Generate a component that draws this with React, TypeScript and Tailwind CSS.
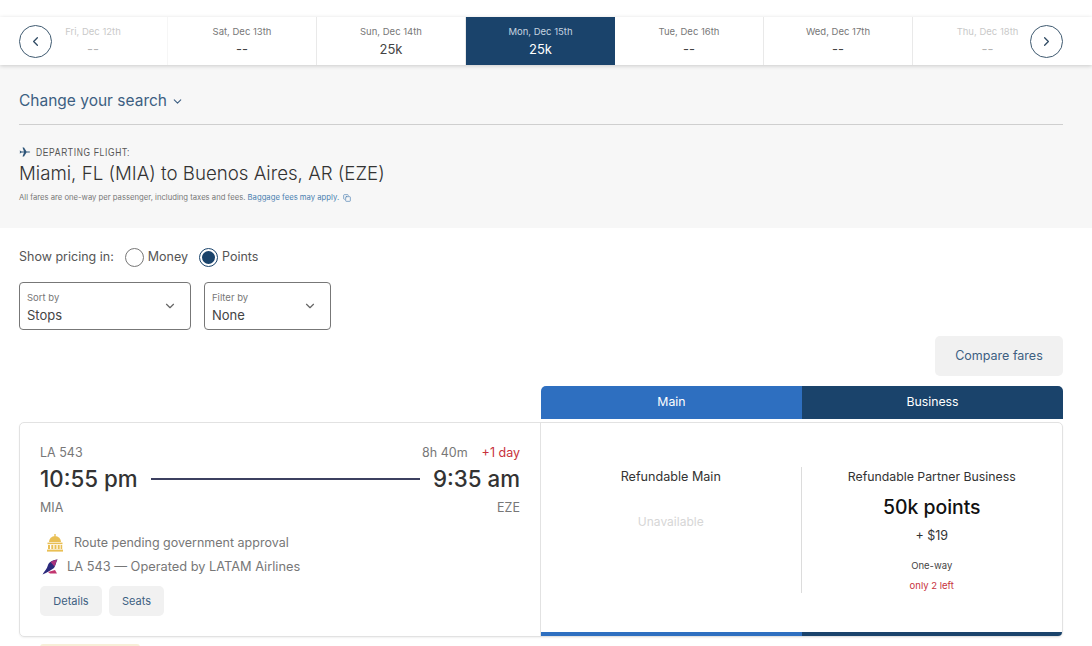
import React from "react";
import { ChevronDown, ChevronLeft, ChevronRight, Copy } from "lucide-react";

const days = [
  { label: "Fri, Dec 12th", value: "--", faded: true },
  { label: "Sat, Dec 13th", value: "--" },
  { label: "Sun, Dec 14th", value: "25k" },
  { label: "Mon, Dec 15th", value: "25k", selected: true },
  { label: "Tue, Dec 16th", value: "--" },
  { label: "Wed, Dec 17th", value: "--" },
  { label: "Thu, Dec 18th", value: "--", faded: true },
];

function DayCell({ label, value, faded, selected, last }: any) {
  let tone = "border-r border-[#e9e9e9] bg-white";
  if (selected) tone = "bg-[#1a436b]";
  if (last) tone = "bg-white";
  return (
    <div className={`flex h-full w-[149px] flex-col items-center pt-[8px] ${tone} ${faded ? "opacity-40" : ""}`}>
      <div className={`text-[9.5px] leading-[13px] ${selected ? "text-[#c5d3e0]" : "text-[#777]"}`}>{label}</div>
      <div className={`mt-[2px] text-[13px] leading-[18px] ${selected ? "text-white" : "text-[#444]"}`}>{value}</div>
    </div>
  );
}

function ArrowButton({ side }: { side: "left" | "right" }) {
  const pos = side === "left" ? "left-[19px]" : "left-[1030px]";
  return (
    <div className={`absolute top-[8px] flex h-[33px] w-[33px] items-center justify-center rounded-full border border-[#3f5a70] bg-white ${pos}`}>
      {side === "left" ? (
        <ChevronLeft size={15} color="#2f4a63" />
      ) : (
        <ChevronRight size={15} color="#2f4a63" />
      )}
    </div>
  );
}

function Radio({ checked }: { checked?: boolean }) {
  return (
    <span className={`flex h-[19px] w-[19px] items-center justify-center rounded-full border ${checked ? "border-[#1a436b] bg-white" : "border-[#777]"}`}>
      {checked && <span className="h-[13px] w-[13px] rounded-full bg-[#1a436b]" />}
    </span>
  );
}

function SelectBox({ label, value, width }: { label: string; value: string; width: string }) {
  return (
    <div className={`relative flex h-[48px] flex-col rounded-[4px] border border-[#777] pl-[7px] pt-[8px] ${width}`}>
      <div className="text-[9.5px] leading-[13px] text-[#777]">{label}</div>
      <div className="mt-[3px] text-[13px] leading-[17px] text-[#444]">{value}</div>
      <ChevronDown size={14} color="#666" className="absolute right-[13px] top-[16px]" />
    </div>
  );
}

function PlaneIcon() {
  return (
    <svg width="12" height="10" viewBox="0 0 24 20" fill="#2d5478">
      <path d="M1 7.5 L3 7.5 L5 9 L10 9 L7 1 L10 1 L15 9 L21 9 Q24 10 21 11 L15 11 L10 19 L7 19 L10 11 L5 11 L3 12.5 L1 12.5 L2.5 10 Z" />
    </svg>
  );
}

function BankIcon() {
  return (
    <svg width="18" height="18" viewBox="0 0 18 18" fill="#e9bf54">
      <rect x="8.3" y="0" width="1.4" height="2" />
      <path d="M3 8 A6 6 0 0 1 15 8 Z" />
      <rect x="1.5" y="8.6" width="15" height="1.6" />
      <rect x="2" y="11" width="2" height="4" />
      <rect x="5.3" y="11" width="2" height="4" />
      <rect x="8.5" y="11" width="2" height="4" />
      <rect x="11.7" y="11" width="2" height="4" />
      <rect x="14.6" y="11" width="1.6" height="4" />
      <rect x="1" y="15.6" width="16" height="2" />
    </svg>
  );
}

function LatamIcon() {
  return (
    <svg width="16" height="16" viewBox="0 0 16 16">
      <path d="M0.5 15.5 C2.5 12 5 10 6 6 C7 3 10 1.2 15.5 0.5 C14 3 14 6 12 9 C9.5 11 5 13.5 0.5 15.5 Z" fill="#2b2a7c" />
      <path d="M8.5 3 C10.5 1.8 13 1 15.5 0.5 C14 2.5 13.8 5 12.5 7.5 Z" fill="#a8327c" />
      <path d="M6 13 L13 11 L15 14.5 L8 14.5 Z" fill="#c2356f" />
    </svg>
  );
}

export default function App() {
  return (
    <div className="h-[646px] w-[1092px] overflow-hidden bg-white font-['Inter',sans-serif] text-[#333]">
      <div className="pt-[17px]">
        <div className="relative z-10 flex h-[48px] bg-white px-[19px] shadow-[0_1px_4px_rgba(0,0,0,0.18)]">
          {days.map((d, i) => (
            <DayCell key={d.label} {...d} last={i === days.length - 1} />
          ))}
          <ArrowButton side="left" />
          <ArrowButton side="right" />
        </div>
      </div>

      <div className="h-[163px] bg-[#f7f7f7] pl-[19px] pr-[29px] pt-[26px]">
        <div className="flex items-center gap-[4px] border-b border-[#cfcfcf] pb-[13px] text-[15.5px] leading-[20px] text-[#3d5f82]">
          <span>Change your search</span>
          <ChevronDown size={13} color="#3d5f82" />
        </div>
        <div className="mt-[20px] flex items-center gap-[5px] text-[11px] leading-[14px] tracking-[0.08em] text-[#555]">
          <PlaneIcon />
          <span className="origin-left scale-x-[0.77] font-['Liberation_Sans',sans-serif]">DEPARTING FLIGHT:</span>
        </div>
        <div className="mt-[2px] text-[18.7px] font-light leading-[26px] text-[#333]">Miami, FL (MIA) to Buenos Aires, AR (EZE)</div>
        <div className="mt-[5px] flex items-center gap-[4px] text-[7.7px] leading-[12px] text-[#777]">
          <span>
            All fares are one-way per passenger, including taxes and fees.{" "}
            <span className="text-[#4a7fb0]">Baggage fees may apply.</span>
          </span>
          <Copy size={8} color="#4a7fb0" />
        </div>
      </div>

      <div className="pl-[19px] pr-[29px]">
        <div className="mt-[20px] flex h-[19px] items-center text-[12.5px] text-[#555]">
          <span className="mr-[11px]">Show pricing in:</span>
          <Radio />
          <span className="ml-[4px] mr-[11px]">Money</span>
          <Radio checked />
          <span className="ml-[4px]">Points</span>
        </div>

        <div className="mt-[15px] flex gap-[13px]">
          <SelectBox label="Sort by" value="Stops" width="w-[172px]" />
          <SelectBox label="Filter by" value="None" width="w-[127px]" />
        </div>

        <div className="mt-[6px] flex justify-end">
          <div className="flex h-[40px] w-[128px] items-center justify-center rounded-[5px] bg-[#f1f1f1] text-[12.5px] text-[#3d5f82]">
            Compare fares
          </div>
        </div>

        <div className="ml-[522px] mt-[10px] flex h-[33px] overflow-hidden rounded-t-[5px] text-[12.3px] text-white">
          <div className="flex w-1/2 items-center justify-center bg-[#2e6fc0]">Main</div>
          <div className="flex w-1/2 items-center justify-center bg-[#1a436b]">Business</div>
        </div>

        <div className="relative mt-[3px] flex h-[215px] overflow-hidden rounded-[5px] border border-[#e2e2e2] shadow-[0_1px_2px_rgba(0,0,0,0.06)]">
          <div className="w-[521px] border-r border-[#e2e2e2] pl-[20px] pr-[20px] pt-[21px]">
            <div className="flex items-center justify-between text-[12.5px] leading-[17px] text-[#777]">
              <span>LA 543</span>
              <span>
                8h 40m<span className="ml-[14px] text-[#c8323c]">+1 day</span>
              </span>
            </div>
            <div className="mt-[2px] flex items-center">
              <span className="text-[22.3px] font-medium leading-[32px] text-[#333]">10:55 pm</span>
              <span className="mx-[13px] h-[2px] flex-1 bg-[#3c4060]" />
              <span className="text-[22.3px] font-medium leading-[32px] text-[#333]">9:35 am</span>
            </div>
            <div className="mt-[4px] flex justify-between text-[12.5px] leading-[17px] text-[#777]">
              <span>MIA</span>
              <span>EZE</span>
            </div>
            <div className="mt-[18px] flex h-[18px] items-center text-[12.5px] text-[#777]">
              <span className="ml-[6px] mr-[10px] flex"><BankIcon /></span>
              Route pending government approval
            </div>
            <div className="mt-[6px] flex h-[18px] items-center text-[12.8px] text-[#777]">
              <span className="ml-[2px] mr-[9px] flex"><LatamIcon /></span>
              LA 543 — Operated by LATAM Airlines
            </div>
            <div className="mt-[10px] flex gap-[7px] text-[11px] text-[#3d5f82]">
              <div className="flex h-[30px] w-[62px] items-center justify-center rounded-[5px] bg-[#f1f1f1]">Details</div>
              <div className="flex h-[30px] w-[55px] items-center justify-center rounded-[5px] bg-[#f1f1f1]">Seats</div>
            </div>
          </div>

          <div className="flex flex-1 pt-[44px]">
            <div className="flex h-[126px] w-1/2 flex-col items-center border-r border-[#dcdcdc] pt-[1px]">
              <div className="text-[12.6px] leading-[18px] text-[#333]">Refundable Main</div>
              <div className="mt-[27px] text-[12px] leading-[18px] text-[#d6d6d6]">Unavailable</div>
            </div>
            <div className="flex h-[126px] w-1/2 flex-col items-center pt-[1px]">
              <div className="text-[12.3px] leading-[18px] text-[#333]">Refundable Partner Business</div>
              <div className="mt-[8px] text-[19.4px] font-medium leading-[26px] text-[#111]">50k points</div>
              <div className="mt-[7px] text-[12.5px] leading-[18px] text-[#333]">+ $19</div>
              <div className="mt-[14px] text-[9.5px] leading-[14px] text-[#444]">One-way</div>
              <div className="mt-[6px] text-[9.5px] leading-[14px] text-[#c8323c]">only 2 left</div>
            </div>
          </div>

          <div className="absolute bottom-0 left-[521px] right-0 flex h-[4px]">
            <div className="w-1/2 bg-[#2e6fc0]" />
            <div className="w-1/2 bg-[#1a436b]" />
          </div>
        </div>

        <div className="ml-[21px] mt-[7px] h-[4px] w-[100px] rounded-t-[3px] bg-[#f7efd8]" />
      </div>
    </div>
  );
}
